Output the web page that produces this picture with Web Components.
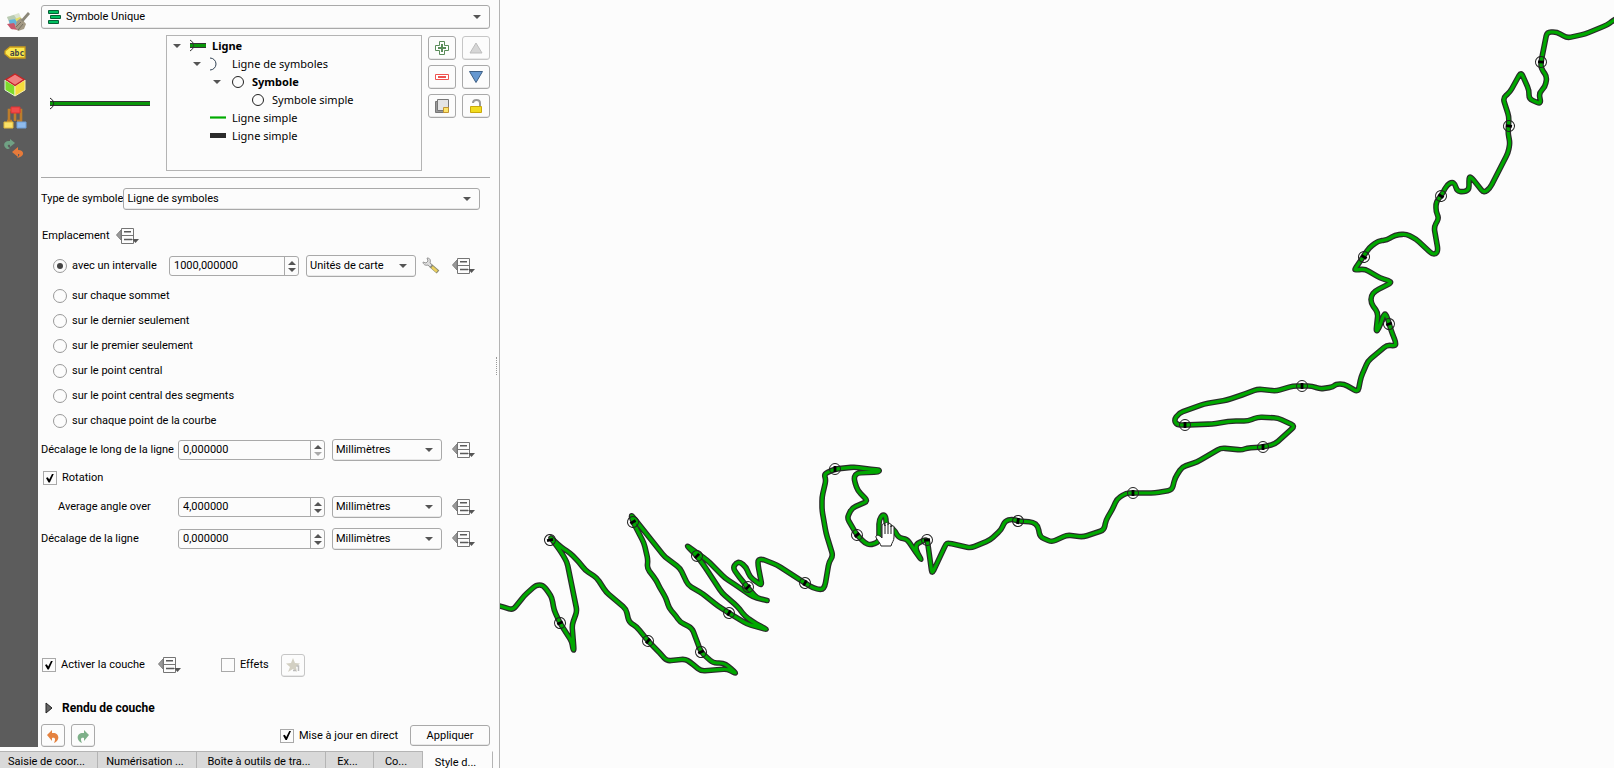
<!DOCTYPE html>
<html lang="fr">
<head>
<meta charset="utf-8">
<title>Style de couche</title>
<style>
  html, body { height: 100%; }
  body {
    margin: 0;
    overflow: hidden;
    background: #fcfcfc;
    color: #000;
    font: 11px/16px Roboto, "Open Sans", sans-serif;
  }
</style>
</head>
<body>
<style-app></style-app>

<script>
// Styles communs aux contrôles
const base = `
  *, *::before, *::after { box-sizing: border-box; }
  button, input, select { font: inherit; color: inherit; margin: 0; }
  svg { display: block; flex: none; }
`;

class BaseElement extends HTMLElement {
  constructor() {
    super();
    this.attachShadow({ mode: 'open' });
  }

  connectedCallback() {
    this.shadowRoot.innerHTML = `<style>${base}</style>${this.render()}`;
  }
}

// Liste déroulante : label, value, options séparées par |
class ComboBox extends BaseElement {
  render() {
    const options = this.getAttribute('options').split('|');
    return `
      <style>
        :host { display: flex; height: 22px; min-width: 0; }
        label { display: flex; flex: 1; align-items: center; min-width: 0; }
        .box {
          display: flex; flex: 1; align-items: center; align-self: stretch; min-width: 0;
          padding: 0 8px 0 3px;
          border: 1px solid #a9a9a9; border-radius: 3px;
          background: #fcfcfc; box-shadow: inset 0 -2px 0 -1px #e8e8e8;
        }
        select { flex: 1; min-width: 0; border: 0; padding: 0; background: none; appearance: none; outline: none; }
        ::slotted(svg) { display: block; margin: 0 4px 0 3px; }
      </style>
      <label>
        <span>${this.getAttribute('label') || ''}</span>
        <div class="box">
          <slot name="icon"></slot>
          <select aria-label="${this.getAttribute('name')}">${options.map(o => `<option>${o}</option>`).join('')}</select>
          <svg width="8" height="4"><path d="M0 0h8L4 4z" fill="#555"/></svg>
        </div>
      </label>
    `;
  }
}
customElements.define('combo-box', ComboBox);

// Champ numérique avec ses deux flèches
class SpinBox extends BaseElement {
  render() {
    const down = this.hasAttribute('at-min') ? '#aaa' : '#555';
    return `
      <style>
        :host { display: flex; min-width: 0; }
        label { display: flex; flex: 1; align-items: center; min-width: 0; }
        .text { flex: 0 0 var(--label-width, 0px); padding-left: var(--indent, 0px); white-space: nowrap; overflow: hidden; }
        .box { display: flex; flex: 1; height: 20px; min-width: 0; border: 1px solid #a9a9a9; border-radius: 3px; }
        input { flex: 1; min-width: 0; border: 0; padding: 0 4px; background: none; outline: none; }
        .arrows { flex: none; width: 14px; border-left: 1px solid #a9a9a9; display: grid; place-content: center; gap: 3px; }
      </style>
      <label>
        <span class="text">${this.getAttribute('label') || ''}</span>
        <span class="box">
          <input type="text" value="${this.getAttribute('value')}" aria-label="${this.getAttribute('name')}">
          <span class="arrows">
            <svg width="8" height="4"><path d="M0 4h8L4 0z" fill="#555"/></svg>
            <svg width="8" height="4"><path d="M0 0h8L4 4z" fill="${down}"/></svg>
          </span>
        </span>
      </label>
    `;
  }
}
customElements.define('spin-box', SpinBox);

// Case à cocher
class CheckOption extends BaseElement {
  render() {
    return `
      <style>
        :host { display: block; }
        label { display: flex; align-items: center; gap: 5px; white-space: nowrap; }
        input {
          appearance: none; width: 14px; height: 14px;
          border: 1px solid #a9a9a9; background: #fcfcfc; display: grid; place-content: center;
        }
        input:checked::before {
          content: ""; width: 8px; height: 9px; background: #000;
          clip-path: polygon(0 50%, 22% 42%, 40% 68%, 78% 0, 100% 0, 48% 100%, 32% 100%);
        }
      </style>
      <label><input type="checkbox" ${this.hasAttribute('checked') ? 'checked' : ''}><slot></slot></label>
    `;
  }
}
customElements.define('check-option', CheckOption);

// Bouton carré à icône
class ToolButton extends BaseElement {
  render() {
    return `
      <style>
        :host { display: block; width: 24px; height: 23px; }
        button {
          width: 100%; height: 100%; padding: 0; display: grid; place-content: center;
          border: 1px solid #a9a9a9; border-radius: 3px; background: #fcfcfc;
          box-shadow: inset 0 -2px 0 -1px #e8e8e8;
        }
        button:disabled { border-color: #c6c6c6; }
        ::slotted(svg) { display: block; }
      </style>
      <button type="button" aria-label="${this.getAttribute('name') || ''}" ${this.hasAttribute('disabled') ? 'disabled' : ''}><slot></slot></button>
    `;
  }
}
customElements.define('tool-button', ToolButton);

// Bouton « valeur définie par des données »
class OverrideButton extends BaseElement {
  render() {
    return `
      <style>
        :host { display: block; }
        button { display: block; border: 0; padding: 0; background: none; }
      </style>
      <button type="button" aria-label="Valeur définie par des données">
        <svg width="24" height="18" viewBox="0 0 24 18">
          <path d="M.5 8 5 3v10z" fill="#999" stroke="#808080"/>
          <path d="M5.500 1.500h12v15h-12z" fill="#fcfcfc" stroke="#757575"/>
          <path d="M5 8.500h12" stroke="#757575"/>
          <path d="M8 4.800h7M8 12.500h8" stroke="#5a5a5a" stroke-width="1.400"/>
          <path d="M16 12h7l-3.500 4z" fill="#555"/>
        </svg>
      </button>
    `;
  }
}
customElements.define('override-button', OverrideButton);

class SideBar extends BaseElement {
  render() {
    return `
      <style>
        :host { display: block; width: 38px; background: #5c5c5c; }
        nav { display: flex; flex-direction: column; }
        button { height: 32px; border: 0; padding: 0 0 0 3px; background: none; }
        .on { height: 37px; background: #fcfcfc; padding: 6px 0 0 6px; }
      </style>
      <nav>
        <button type="button" class="on" aria-label="Symbologie">
          <svg width="24" height="20" viewBox="0 0 24 20">
            <path d="M1 5 13 1l4 9-11 8z" fill="#dce4cf"/>
            <path d="M1 5 8 3l4 6-8 3z" fill="#b9cbb2"/>
            <path d="m3 8 7-1 2 5-8 3z" fill="#62b4dc"/>
            <path d="m1 12 7-1 4 7-7-1z" fill="#c9586c"/>
            <path d="m9 7 5-2 4 5-5 3z" fill="#e4de67"/>
            <path d="m11 9 4-3 5 6-2 5-6 2-3-4z" fill="#a49a85"/>
            <path d="m10 15 5-5m-3 8 5-6" stroke="#777163"/>
            <path d="m16 9 7-8" stroke="#8b8779" stroke-width="2.800"/>
          </svg>
        </button>
        <button type="button" aria-label="Étiquettes">
          <svg width="24" height="14" viewBox="0 0 24 14">
            <path d="M7 1h15v11H7L2 8V5z" fill="#fce94f" stroke="#c99b1b" stroke-width="1.300"/>
            <text x="14" y="10" text-anchor="middle" font-family="DejaVu Sans Mono, monospace" font-size="8" font-weight="700" fill="#444">abc</text>
          </svg>
        </button>
        <button type="button" aria-label="Vue 3D">
          <svg width="24" height="24" viewBox="0 0 24 24">
            <path d="m2 7 10 6v10L2 17z" fill="#7ddc2c" stroke="#e4f5d6"/>
            <path d="m22 7-10 6v10l10-6z" fill="#f6dc3c" stroke="#f7eeb0"/>
            <path d="m12 1 9 5.500-9 6-9-6z" fill="#f08080" stroke="#c82424" stroke-width="1.400"/>
          </svg>
        </button>
        <button type="button" aria-label="Diagrammes">
          <svg width="24" height="24" viewBox="0 0 24 24">
            <path d="M6 17V5h12v12M12 7v9M4 16h5m5 0h5" fill="none" stroke="#bd7d2c" stroke-width="2.600"/>
            <path d="M8 2h9v6H8z" fill="#ef4b4b" stroke="#d33"/>
            <path d="M1 17h9v6H1z" fill="#fbe26a" stroke="#e3b93b"/>
            <path d="M14 17h9v6h-9z" fill="#8fbbed" stroke="#6e9fd8"/>
          </svg>
        </button>
        <button type="button" aria-label="Historique">
          <svg width="22" height="20" viewBox="0 0 22 20">
            <path d="M4 10C-1 7 1 1 7 2V0l5 4-5 4V6C4 5 4 8 7 9c-1 1-2 1-3 1z" fill="#70a184"/>
            <path d="M15 11c7 0 7 7-1 8 3-3 3-4 1-4v3l-6-5 6-5z" fill="#e67a3a"/>
          </svg>
        </button>
      </nav>
    `;
  }
}
customElements.define('side-bar', SideBar);

class SymbolTree extends BaseElement {
  rows = [
    { level: 0, open: true, bold: true, text: 'Ligne', icon: '<path d="M0 5h16v5H0z" fill="#333"/><path d="M0 6h16v3H0z" fill="#0a960a"/><path d="M0 2a6 6 0 0 1 0 11" fill="none" stroke="#333"/>' },
    { level: 1, open: true, text: 'Ligne de symboles', icon: '<path d="M0 2a6 6 0 0 1 0 12" fill="none" stroke="#345"/>' },
    { level: 2, open: true, bold: true, text: 'Symbole', icon: '<circle cx="8" cy="8" r="5.500" fill="none" stroke="#222"/>' },
    { level: 3, text: 'Symbole simple', icon: '<circle cx="8" cy="8" r="5.500" fill="none" stroke="#222"/>' },
    { level: 1, text: 'Ligne simple', icon: '<path d="M0 6h16v3H0z" fill="#6c6"/><path d="M0 7h16v1H0z" fill="#0a0"/>' },
    { level: 1, text: 'Ligne simple', icon: '<path d="M0 5h16v5H0z" fill="#2b2b2b"/>' },
  ];

  render() {
    return `
      <style>
        :host { display: block; border: 1px solid #b4b4b4; padding-top: 1px; font-family: "Noto Sans", "Open Sans", sans-serif; }
        ul { margin: 0; padding: 0; list-style: none; }
        li { display: flex; align-items: center; height: 18px; padding-left: calc(var(--level) * 20px); white-space: nowrap; }
        .arrow { width: 20px; padding-left: 6px; margin-right: 3px; }
        .icon { margin-right: 6px; }
        .bold { font-weight: 700; }
      </style>
      <ul>${this.rows.map(r => `
        <li style="--level: ${r.level}">
          <span class="arrow">${r.open ? '<svg width="8" height="4"><path d="M0 0h8L4 4z" fill="#555"/></svg>' : ''}</span>
          <svg class="icon" width="16" height="16">${r.icon}</svg>
          <span class="${r.bold ? 'bold' : ''}">${r.text}</span>
        </li>`).join('')}
      </ul>
    `;
  }
}
customElements.define('symbol-tree', SymbolTree);

// Choix de l'emplacement ; le slot reçoit les réglages de l'intervalle
class PlacementGroup extends BaseElement {
  render() {
    const others = [
      'sur chaque sommet',
      'sur le dernier seulement',
      'sur le premier seulement',
      'sur le point central',
      'sur le point central des segments',
      'sur chaque point de la courbe',
    ];
    return `
      <style>
        :host { display: block; padding-left: 12px; }
        label { display: flex; align-items: center; gap: 5px; height: 25px; white-space: nowrap; }
        .first { display: flex; align-items: center; height: 24px; margin-bottom: 5px; }
        .first label { flex: 0 0 116px; }
        input {
          appearance: none; width: 14px; height: 14px; border: 1px solid #999; border-radius: 50%;
          display: grid; place-content: center;
        }
        input:checked::before { content: ""; width: 6px; height: 6px; border-radius: 50%; background: #444; }
      </style>
      <div class="first">
        <label><input type="radio" name="placement" checked>avec un intervalle</label>
        <slot></slot>
      </div>
      ${others.map(t => `<label><input type="radio" name="placement">${t}</label>`).join('')}
    `;
  }
}
customElements.define('placement-group', PlacementGroup);

class DockTabs extends BaseElement {
  render() {
    const tabs = [
      ['Saisie de coor...', 98], ['Numérisation ...', 99], ['Boîte à outils de tra...', 129],
      ['Ex...', 48], ['Co...', 49], ['Style d...', 70],
    ];
    return `
      <style>
        :host { display: block; height: 17px; overflow: hidden; }
        div { display: flex; }
        button {
          flex: none; height: 24px; padding: 0 8px 2px 4px; overflow: hidden; white-space: nowrap;
          border: 1px solid #b4b4b4; border-left: 0; background: #d9d9d9;
        }
        .on { background: #fcfcfc; padding-bottom: 0; border-top-color: #fcfcfc; }
      </style>
      <div role="tablist">${tabs.map(([t, w], i) => `
        <button type="button" role="tab" style="width: ${w}px" class="${i === 5 ? 'on' : ''}">${t}</button>`).join('')}
      </div>
    `;
  }
}
customElements.define('dock-tabs', DockTabs);

class StylePanel extends BaseElement {
  render() {
    return `
      <style>
        :host { display: flex; flex-direction: column; padding: 5px 0 4px; }
        .row { display: flex; align-items: center; flex: none; }
        .top { align-items: stretch; height: 136px; margin: 6px 0; }
        .preview { flex: 1; padding: 62px 0 0 9px; }
        symbol-tree { flex: 0 0 256px; margin-right: 6px; }
        .tools { display: grid; grid-template-columns: 28px 28px; gap: 5px 6px; align-content: start; padding-top: 1px; }
        .tools tool-button { width: 28px; height: 24px; }
        hr { width: 100%; margin: 0; border: 0; border-top: 1px solid #a9a9a9; }
        .form { display: flex; flex-direction: column; flex: 1; padding-right: 10px; }
        .type { margin-top: 10px; }
        .place { height: 24px; margin: 14px 0 6px; padding-left: 1px; gap: 7px; }
        .interval { flex: 0 0 130px; }
        .unit { flex: 0 0 110px; margin: 0 6px 0 7px; }
        .wrench { border: 0; padding: 0; margin-right: 12px; background: none; }
        .measure { --label-width: 137px; height: 22px; }
        .measure spin-box { flex: 1; }
        .measure .unit { margin-right: 10px; }
        .measure override-button { margin-right: 4px; }
        .first { margin-top: 6px; }
        .rotation { height: 20px; margin: 7px 0 8px; padding-left: 2px; }
        .average { --indent: 17px; margin-bottom: 10px; }
        .layer { height: 24px; margin-bottom: 21px; padding-left: 1px; }
        .layer override-button { margin: 0 39px 0 13px; }
        .layer tool-button { margin-left: 12px; }
        .render {
          display: flex; align-items: center; gap: 9px; height: 20px; margin-bottom: 6px;
          padding: 0 0 0 4px; border: 0; background: none; font-size: 12px; font-weight: 700;
        }
        .actions { gap: 6px; }
        .live { margin: 0 6px 0 auto; }
        .apply {
          width: 80px; height: 21px; padding: 0; border: 1px solid #a9a9a9; border-radius: 3px;
          background: #fcfcfc; box-shadow: inset 0 -2px 0 -1px #e8e8e8;
        }
      </style>

      <combo-box style="height: 24px" name="Type de rendu" options="Symbole Unique|Catégorisé|Gradué">
        <svg slot="icon" width="14" height="16" viewBox="0 0 14 16">
          <g fill="#00c060" stroke="#075f36"><path d="M.5 1.500h10v3H.5zM2.500 6.500h10v3h-10zM.5 11.500h10v3H.5z"/></g>
        </svg>
      </combo-box>

      <div class="row top">
        <div class="preview">
          <svg width="100" height="14">
            <path d="M0 4h100v5H0z" fill="#333"/><path d="M0 5h100v3H0z" fill="#0a960a"/>
            <path d="M0 1a6 6 0 0 1 0 11" fill="none" stroke="#222"/>
          </svg>
        </div>
        <symbol-tree></symbol-tree>
        <div class="tools">
          <tool-button name="Ajouter"><svg width="16" height="16"><path d="M5.500 1.500h5v4h4v5h-4v4h-5v-4h-4v-5h4z" fill="#fff" stroke="#5a8c5a"/><path d="M8 4v8M4 8h8" stroke="#5a8c5a" stroke-width="2"/></svg></tool-button>
          <tool-button name="Monter" disabled><svg width="16" height="14"><path d="m8 2 6 10H2z" fill="#d6d6d6" stroke="#bdbdbd"/></svg></tool-button>
          <tool-button name="Supprimer"><svg width="16" height="16"><path d="M1.500 5.500h13v5h-13z" fill="#fff" stroke="#ef5350"/><path d="M4 8h8" stroke="#ef5350" stroke-width="2"/></svg></tool-button>
          <tool-button name="Descendre"><svg width="16" height="14"><path d="M1.500 1.500h13L8 12.500z" fill="#6698d0" stroke="#3d5f85"/></svg></tool-button>
          <tool-button name="Dupliquer"><svg width="16" height="16"><path d="M1.500 3.500h10v11h-10z" fill="#999" stroke="#777"/><path d="M3.500 1.500h11v11h-11z" fill="#e4e4e4" stroke="#777"/><path d="M9.500 9.500h5v5h-5z" fill="#fce56b" stroke="#c39432"/></svg></tool-button>
          <tool-button name="Verrouiller"><svg width="16" height="16"><path d="M5 5c0-4 7-4 7 0v4" fill="none" stroke="#999" stroke-width="2"/><path d="M2.500 8.500h11v6h-11z" fill="#f1dc1e" stroke="#c9a80c"/></svg></tool-button>
        </div>
      </div>
      <hr>

      <div class="form">
        <combo-box class="type" label="Type de symbole" name="Type de symbole" options="Ligne de symboles|Ligne simple"></combo-box>
        <div class="row place"><span>Emplacement</span><override-button></override-button></div>

        <placement-group>
          <spin-box class="interval" name="Intervalle" value="1000,000000"></spin-box>
          <combo-box class="unit" name="Unité" options="Unités de carte|Millimètres"></combo-box>
          <button class="wrench" type="button" aria-label="Ajuster l'échelle">
            <svg width="18" height="18" viewBox="0 0 18 18">
              <path d="m8 8 8 7" stroke="#8a8a70" stroke-width="4"/><path d="m10 10 5 4.500" stroke="#ecd05e" stroke-width="2.500"/>
              <path d="M5 1c3 0 4 2 3 5l2 2-2 2-2-2C3 9 1 7 1 5l3 1 2-2z" fill="#ddd" stroke="#999"/>
            </svg>
          </button>
          <override-button></override-button>
        </placement-group>

        <div class="row measure first">
          <spin-box label="Décalage le long de la ligne" name="Décalage le long de la ligne" value="0,000000" at-min></spin-box>
          <combo-box class="unit" name="Unité" options="Millimètres|Unités de carte"></combo-box>
          <override-button></override-button>
        </div>
        <div class="row rotation"><check-option checked>Rotation</check-option></div>
        <div class="row measure average">
          <spin-box label="Average angle over" name="Average angle over" value="4,000000"></spin-box>
          <combo-box class="unit" name="Unité" options="Millimètres|Unités de carte"></combo-box>
          <override-button></override-button>
        </div>
        <div class="row measure">
          <spin-box label="Décalage de la ligne" name="Décalage de la ligne" value="0,000000"></spin-box>
          <combo-box class="unit" name="Unité" options="Millimètres|Unités de carte"></combo-box>
          <override-button></override-button>
        </div>
      </div>

      <div class="row layer">
        <check-option checked>Activer la couche</check-option>
        <override-button></override-button>
        <check-option>Effets</check-option>
        <tool-button name="Personnaliser les effets" disabled>
          <svg width="16" height="16"><path d="m8 1 2 5 5 .5-4 3.500 1 5-4-3-5 3 2-5-4-3.500L6 6z" fill="#d3d0c3"/><path d="M8 13.500h3M13.500 14V9h-2" fill="none" stroke="#bbb" stroke-width="1.500"/></svg>
        </tool-button>
      </div>
      <button class="render" type="button" aria-expanded="false">
        <svg width="8" height="12"><path d="m1 1 6 5-6 5z" fill="#666" stroke="#222"/></svg>Rendu de couche
      </button>
      <div class="row actions">
        <tool-button name="Annuler"><svg width="14" height="14"><path d="M6 1v3c7-1 9 7 2 10 2-4 1-6-2-5v3L1 6z" fill="#e5823f"/></svg></tool-button>
        <tool-button name="Rétablir"><svg width="14" height="14"><path d="M8 1v3C1 3-1 11 6 14 4 10 5 8 8 9v3l5-6z" fill="#7eb089"/></svg></tool-button>
        <check-option class="live" checked>Mise à jour en direct</check-option>
        <button class="apply" type="button">Appliquer</button>
      </div>
    `;
  }
}
customElements.define('style-panel', StylePanel);

// Canevas : tracé et marqueurs [x, y, angle du trait] en pixels de la fenêtre
class MapCanvas extends BaseElement {
  track = `498,606 500,606 513,610 524,596 536,585 543,585 549,593 552,598 554,610 560,623 572,642 573,650 574,650
    572,625 577,611 567,562 561,552 551,538 551,538 561,547 570,553 579,562 585,570 597,578 606,592 626,609 629,622 637,627
    648,641 657,650 667,661 685,659 690,662 701,671 727,669 737,674 728,666 723,663 713,663 701,652 692,628 680,622
    676,616 669,608 666,598 660,588 656,580 647,568 648,560 644,543 633,522 631,515 633,517 665,557 680,568 688,585 703,594
    718,606 729,613 747,624 768,630 753,622 745,616 737,606 722,593 705,567 697,556 686,545 707,560 725,578 737,586 753,597
    769,601 757,598 748,588 737,574 733,568 736,563 740,562 746,567 750,577 762,586 758,565 758,560 762,559 777,565 805,583
    813,588 822,590 825,586 829,562 833,556 826,533 822,510 822,497 826,480 824,474 835,469 855,467 867,469 880,470 878,472
    857,473 854,477 855,483 858,491 868,501 852,508 847,518 857,535 865,543 870,545 879,542 879,520 883,514 886,517 886,525
    893,528 899,538 907,539 913,548 922,561 916,550 916,544 927,539 928,545 932,574 946,544 948,543 971,548 990,540
    1001,530 1005,521 1012,519 1018,521 1033,522 1038,526 1040,537 1052,542 1067,535 1083,537 1104,530 1106,520 1112,510
    1117,499 1126,493 1133,493 1155,493 1172,490 1175,478 1182,467 1197,462 1221,448 1242,450 1247,448 1263,447 1275,444
    1295,426 1278,418 1258,417 1248,421 1232,421 1212,424 1185,425 1177,425 1174,420 1179,413 1204,404 1227,400 1242,395
    1258,389 1276,391 1293,386 1302,386 1312,386 1320,389 1333,387 1336,384 1344,384 1358,392 1361,377 1368,361 1387,345
    1395,346 1396,343 1391,330 1389,323 1386,314 1384,314 1379,328 1376,332 1378,313 1371,303 1371,296 1375,291 1391,283
    1390,281 1380,278 1365,269 1355,270 1355,269 1363,257 1369,248 1378,241 1387,240 1395,235 1406,234 1416,239 1432,254
    1436,254 1438,250 1434,227 1439,218 1436,212 1436,202 1441,196 1447,185 1452,182 1455,184 1457,191 1463,192 1469,190
    1469,177 1471,177 1484,193 1490,188 1508,153 1510,143 1508,133 1509,117 1503,98 1510,92 1521,72 1529,90 1529,99
    1541,104 1539,93 1545,87 1547,77 1541,68 1541,62 1547,32 1557,32 1567,38 1585,34 1607,25 1614,20 1640,4`;

  marks = [
    [550, 540, -10], [560, 623, -25], [633, 522, -30], [648, 641, -50], [701, 652, -25], [697, 556, -45],
    [729, 613, -60], [748, 587, -45], [805, 583, -60], [835, 469, -90], [857, 535, -40], [927, 540, -5],
    [1018, 521, -80], [1133, 493, -90], [1263, 447, -90], [1185, 425, -90], [1302, 386, -90], [1389, 324, -20],
    [1364, 257, 30], [1441, 196, 30], [1509, 126, 8], [1541, 62, 4],
  ];

  // Arrondit chaque sommet du tracé sur quelques pixels
  smooth() {
    const p = this.track.trim().split(/\s+/).map(s => s.split(',').map(Number));
    const toward = (a, b) => {
      const len = Math.hypot(b[0] - a[0], b[1] - a[1]) || 1;
      const k = Math.min(4, len / 2) / len;
      return [a[0] + (b[0] - a[0]) * k, a[1] + (b[1] - a[1]) * k];
    };
    let d = `M${p[0]}`;
    for (let i = 1; i < p.length - 1; i++) {
      d += ` L${toward(p[i], p[i - 1])} Q${p[i]} ${toward(p[i], p[i + 1])}`;
    }
    return `${d} L${p[p.length - 1]}`;
  }

  render() {
    const d = this.smooth();
    return `
      <style>
        :host { display: block; overflow: hidden; background: #fcfcfc; }
        svg { width: 100%; height: 100%; }
        .line { fill: none; stroke-linejoin: round; stroke-linecap: round; }
      </style>
      <svg role="img" aria-label="Carte">
        <g transform="translate(-500 0)">
          <path class="line" d="${d}" stroke="#2a2a2a" stroke-width="5.600"/>
          <path class="line" d="${d}" stroke="#00a800" stroke-width="3.200"/>
          ${this.marks.map(([x, y, a]) => `
            <g transform="translate(${x} ${y}) rotate(${a})">
              <circle r="5.500" fill="none" stroke="#222"/>
              <path d="M-3 0h6" stroke="#000" stroke-width="2.800"/>
            </g>`).join('')}
          <path d="M881 546c-1-4-6-8-5-10 2-2 4 0 6 2v-12c0-3 3-3 3 0v-2c0-2 3-2 3 0v1c0-2 3-2 3 0v2c0-2 3-1 3 0v10c0 4-2 5-3 9z" fill="#fff" stroke="#222"/>
          <path d="M885 525v9m3-9v9m3-8v8" stroke="#222"/>
        </g>
      </svg>
    `;
  }
}
customElements.define('map-canvas', MapCanvas);

class StyleApp extends BaseElement {
  render() {
    return `
      <style>
        :host { display: flex; height: 100vh; }
        aside { display: flex; flex-direction: column; flex: 0 0 500px; min-width: 0; border-right: 1px solid #b4b4b4; }
        .dock { display: flex; flex: 1; min-height: 0; }
        side-bar { flex: 0 0 38px; margin-bottom: 4px; }
        style-panel { flex: 1; min-width: 0; margin-left: 3px; }
        .handle { display: grid; place-content: center; width: 9px; padding: 0 0 20px 4px; }
        .handle span { height: 18px; border-left: 1px dotted #999; }
        map-canvas { flex: 1; min-width: 0; }
      </style>
      <aside>
        <div class="dock">
          <side-bar></side-bar>
          <style-panel></style-panel>
          <div class="handle"><span></span></div>
        </div>
        <dock-tabs></dock-tabs>
      </aside>
      <map-canvas></map-canvas>
    `;
  }
}
customElements.define('style-app', StyleApp);
</script>
</body>
</html>
